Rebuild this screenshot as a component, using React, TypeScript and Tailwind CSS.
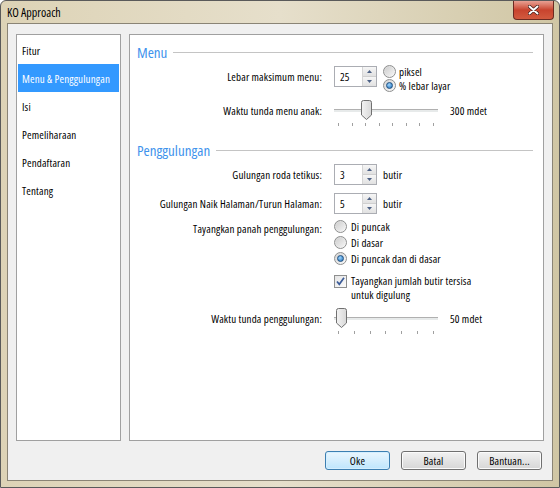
import React from "react";

const font = { fontFamily: '"Open Sans", "Liberation Sans", sans-serif' };

const menuItems = ["Fitur", "Menu & Penggulungan", "Isi", "Pemeliharaan", "Pendaftaran", "Tentang"];

function Radio({ checked }: { checked?: boolean }) {
  return (
    <span className="flex h-[13px] w-[13px] shrink-0 items-center justify-center rounded-full border border-[#8e8f8f] bg-gradient-to-br from-[#d4d4d4] to-[#fbfbfb]">
      {checked ? (
        <span className="h-[7px] w-[7px] rounded-full border border-[#1f4f80] bg-[radial-gradient(circle_at_40%_35%,#9fd6ff,#1b6bb5)]" />
      ) : (
        <span className="h-[9px] w-[9px] rounded-full bg-gradient-to-br from-[#cfcfcf] to-[#f4f4f4]" />
      )}
    </span>
  );
}

function Checkbox() {
  return (
    <span className="flex h-[13px] w-[13px] shrink-0 items-center justify-center border border-[#8e8f8f] bg-gradient-to-br from-[#e4e4e4] to-[#fcfcfc]">
      <svg width="11" height="11" viewBox="0 0 11 11">
        <path d="M2 5.5 L4.3 8.3 L9 1.8" fill="none" stroke="#3b5b98" strokeWidth="1.7" />
      </svg>
    </span>
  );
}

function Spin({ value }: { value: string }) {
  return (
    <div className="flex h-[21px] w-[43px] border border-[#abadb3] bg-white">
      <div className="flex flex-1 items-center pl-[5px]">{value}</div>
      <div className="flex w-[14px] flex-col border-l border-[#d5d5d5]">
        <div className="flex flex-1 items-center justify-center border-b border-[#cfcfcf] bg-gradient-to-b from-[#f6f6f6] to-[#e1e1e1]">
          <svg width="5" height="3" viewBox="0 0 5 3">
            <path d="M0 3 L2.5 0 L5 3 Z" fill="#4d6185" />
          </svg>
        </div>
        <div className="flex flex-1 items-center justify-center bg-gradient-to-b from-[#f6f6f6] to-[#e1e1e1]">
          <svg width="5" height="3" viewBox="0 0 5 3">
            <path d="M0 0 L2.5 3 L5 0 Z" fill="#4d6185" />
          </svg>
        </div>
      </div>
    </div>
  );
}

function Slider({ pos, ticks }: { pos: number; ticks: number }) {
  return (
    <div className="relative h-[28px] w-[104px]">
      <div className="absolute left-0 right-0 top-[9px] h-[3px] border-t border-[#b0b0b0] bg-[#e7eaea]" />
      <div className="absolute left-[4px] right-[4px] top-[23px] flex justify-between">
        {Array.from({ length: ticks }).map((_, i) => (
          <span key={i} className="h-[3px] w-px bg-[#a0a0a0]" />
        ))}
      </div>
      <svg className="absolute top-0" style={{ left: pos }} width="11" height="20" viewBox="0 0 11 20">
        <defs>
          <linearGradient id="thumbg" x1="0" y1="0" x2="1" y2="0">
            <stop offset="0" stopColor="#f3f3f3" />
            <stop offset="1" stopColor="#d8d8d8" />
          </linearGradient>
        </defs>
        <path d="M0.5 2.5 Q0.5 0.5 2.5 0.5 L8.5 0.5 Q10.5 0.5 10.5 2.5 L10.5 15 L5.5 19.5 L0.5 15 Z" fill="url(#thumbg)" stroke="#707070" />
      </svg>
    </div>
  );
}

function Heading({ text }: { text: string }) {
  return (
    <div className="flex items-center gap-[6px] pr-[10px]">
      <span className="text-[15px] leading-[16px] tracking-normal text-[#3f93ec] font-stretch-condensed">{text}</span>
      <div className="h-px flex-1 bg-[#c4c4c4]" />
    </div>
  );
}

function Row({ label, children, className }: { label: string; children: React.ReactNode; className?: string }) {
  return (
    <div className={`flex items-start ${className ?? ""}`}>
      <div className="w-[187px] shrink-0 whitespace-nowrap pt-[3px] pr-[2px] text-right">{label}</div>
      <div className="ml-[10px] flex">{children}</div>
    </div>
  );
}

function Btn({ label, primary }: { label: string; primary?: boolean }) {
  return (
    <button
      className={`h-[19px] w-[65px] rounded-[3px] border text-[11px] leading-none ${
        primary
          ? "border-[#3c7fb1] bg-gradient-to-b from-[#eaf6fd] to-[#bee6fd] shadow-[inset_0_0_0_1px_#d4efff]"
          : "border-[#707070] bg-gradient-to-b from-[#f2f2f2] to-[#d6d6d6] shadow-[inset_0_0_0_1px_#fbfbfb]"
      }`}
    >
      {label}
    </button>
  );
}

export default function App() {
  return (
    <div
      className="h-[488px] w-[560px] overflow-hidden bg-white text-[11px] leading-[15px] tracking-[0.15px] text-black font-stretch-condensed"
      style={font}
    >
      <div className="flex h-full flex-col rounded-t-[6px] border border-[#5a5a5a] bg-gradient-to-r from-[#ddd3b6] via-[#e6dfcb] to-[#d0c6a4]">
        {/* title bar */}
        <div className="flex h-[24px] items-start">
          <span className="pl-[6px] pt-[4px] text-[12px] leading-[15px] tracking-normal font-stretch-semi-condensed">KO Approach</span>
          <div className="ml-auto mr-[5px] flex h-[19px] w-[41px] items-center justify-center rounded-b-[4px] border border-t-0 border-[#6b2a22] bg-gradient-to-b from-[#e8a093] via-[#c8432e] to-[#d25a3f]">
            <svg width="11" height="10" viewBox="0 0 11 10">
              <path d="M1.5 1.5 L9.5 8.5 M9.5 1.5 L1.5 8.5" stroke="#3a1a16" strokeWidth="3.4" strokeLinecap="round" />
              <path d="M1.5 1.5 L9.5 8.5 M9.5 1.5 L1.5 8.5" stroke="#fff" strokeWidth="2" strokeLinecap="round" />
            </svg>
          </div>
        </div>

        {/* client area */}
        <div className="mx-[6px] mb-[6px] flex flex-1 flex-col border border-[#8a8475] bg-[#f0f0f0]">
          <div className="flex flex-1 gap-[8px] px-[8px] pt-[10px]">
            {/* nav list */}
            <div className="flex h-[407px] w-[105px] flex-col border border-[#a0a0a0] bg-white pt-[1px] pl-[1px] pr-[1px]">
              {menuItems.map((m, i) => (
                <div
                  key={m}
                  className={`flex h-[28px] items-center whitespace-nowrap pl-[4px] ${
                    i === 1 ? "bg-[#3399ff] text-white" : ""
                  }`}
                >
                  {m}
                </div>
              ))}
            </div>

            {/* panel */}
            <div className="flex h-[407px] flex-1 flex-col border border-[#a0a0a0] bg-white pl-[7px] pt-[9px]">
              <Heading text="Menu" />
              <Row label="Lebar maksimum menu:" className="mt-[6px]">
                <Spin value="25" />
                <div className="ml-[6px] -mt-[1px] flex flex-col gap-[1px]">
                  <div className="flex h-[13px] items-center gap-[3px]">
                    <Radio />
                    <span>piksel</span>
                  </div>
                  <div className="flex h-[13px] items-center gap-[3px]">
                    <Radio checked />
                    <span>% lebar layar</span>
                  </div>
                </div>
              </Row>
              <Row label="Waktu tunda menu anak:" className="mt-[8px]">
                <Slider pos={27} ticks={8} />
                <span className="ml-[12px] pt-[3px]">300 mdet</span>
              </Row>

              <div className="mt-[14px]">
                <Heading text="Penggulungan" />
              </div>
              <Row label="Gulungan roda tetikus:" className="mt-[6px]">
                <Spin value="3" />
                <span className="ml-[6px] pt-[3px]">butir</span>
              </Row>
              <Row label="Gulungan Naik Halaman/Turun Halaman:" className="mt-[8px]">
                <Spin value="5" />
                <span className="ml-[6px] pt-[3px]">butir</span>
              </Row>
              <Row label="Tayangkan panah penggulungan:" className="mt-[4px]">
                <div className="flex flex-col gap-[2px] pt-[1px]">
                  <div className="flex h-[14px] items-center gap-[4px]">
                    <Radio />
                    <span>Di puncak</span>
                  </div>
                  <div className="flex h-[14px] items-center gap-[4px]">
                    <Radio />
                    <span>Di dasar</span>
                  </div>
                  <div className="flex h-[14px] items-center gap-[4px]">
                    <Radio checked />
                    <span>Di puncak dan di dasar</span>
                  </div>
                  <div className="mt-[7px] flex items-start gap-[4px]">
                    <span className="pt-[1px]">
                      <Checkbox />
                    </span>
                    <div className="flex flex-col leading-[14px]">
                      <span>Tayangkan jumlah butir tersisa</span>
                      <span>untuk digulung</span>
                    </div>
                  </div>
                </div>
              </Row>
              <Row label="Waktu tunda penggulungan:" className="mt-[6px]">
                <Slider pos={2} ticks={7} />
                <span className="ml-[12px] pt-[3px]">50 mdet</span>
              </Row>
            </div>
          </div>

          {/* buttons */}
          <div className="flex h-[39px] items-center justify-end gap-[11px] pr-[10px]">
            <Btn label="Oke" primary />
            <Btn label="Batal" />
            <Btn label="Bantuan..." />
          </div>
        </div>
      </div>
    </div>
  );
}
